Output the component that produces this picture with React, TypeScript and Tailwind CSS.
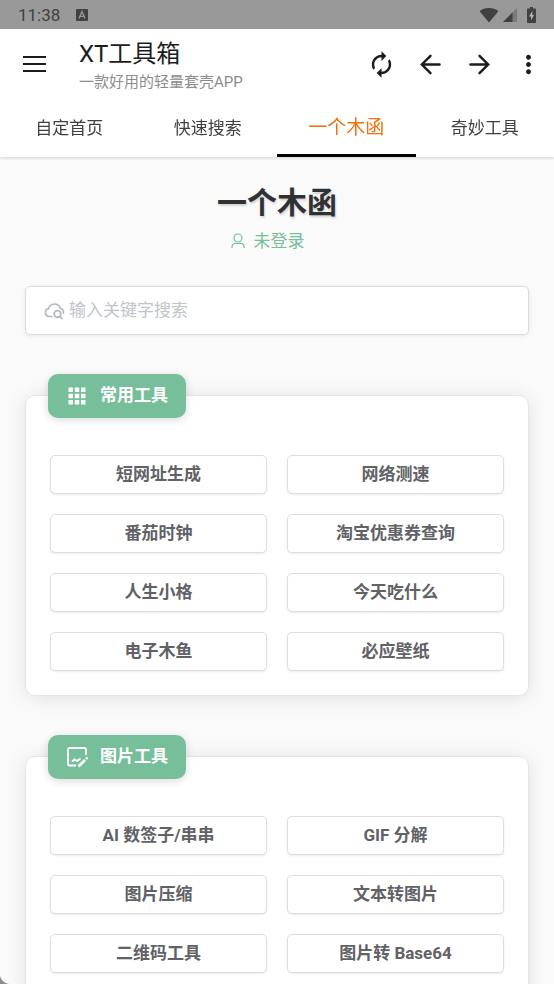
import React, { useState } from 'react';
import { MdAutorenew, MdMoreVert } from 'react-icons/md';

interface ToolGroup {
  id: string;
  title: string;
  icon: React.ReactNode;
  tools: string[];
}

const TABS = ['自定首页', '快速搜索', '一个木函', '奇妙工具'];

function StatusBar() {
  return (
    <div className="flex h-[29px] shrink-0 items-center bg-[#999999] pl-[18px] pr-[18px] pt-px text-[#414141]">
      <span className="text-[17px] leading-5">11:38</span>
      <svg className="ml-4" width="12" height="12" viewBox="0 0 12 12">
        <rect width="12" height="12" rx="1" fill="currentColor" />
        <path d="M3 9.5 6 2.5l3 7M4 7.3h4" fill="none" stroke="#999999" strokeWidth="1.3" />
      </svg>
      <svg className="ml-auto" width="20" height="16" viewBox="0 0 20 16" fill="currentColor">
        <path d="M10 15.5.6 4.2C3 2 6.3 1 10 1s7 1 9.4 3.2z" />
      </svg>
      <svg className="ml-1" width="14" height="14" viewBox="0 0 14 14" fill="currentColor">
        <path d="M14 0v14H0z" opacity=".35" />
        <path d="M9.500 4.500V14H0z" />
      </svg>
      <svg className="ml-2.5" width="9" height="16" viewBox="0 0 9 16">
        <path d="M3 0h3v1.6h2.2c.5 0 .8.3.8.8v12.8c0 .5-.3.8-.8.8H.8c-.5 0-.8-.3-.8-.8V2.4c0-.5.3-.8.8-.8H3z" fill="currentColor" />
        <path d="M5.3 4 2 9.5h2v4L7 8H5.3z" fill="#b5b5b5" />
      </svg>
    </div>
  );
}

function AppHeader() {
  return (
    <header className="flex h-[70px] shrink-0 items-center pl-[22px] pr-[11px] text-[#1c1c1c]">
      <button type="button" aria-label="菜单">
        <svg width="24" height="16" viewBox="0 0 24 16" stroke="currentColor" strokeWidth="2">
          <path d="M1 1h23M1 8h23M1 15h23" />
        </svg>
      </button>
      <div className="ml-[33px] flex-1 pt-1">
        <div className="text-2xl leading-8">XT工具箱</div>
        <div className="text-[15px] leading-6 text-[#8c8c8c]">一款好用的轻量套壳APP</div>
      </div>
      <div className="flex items-center gap-5">
        <button type="button" aria-label="刷新">
          <MdAutorenew size={29} />
        </button>
        <button type="button" aria-label="后退">
          <svg width="29" height="29" viewBox="0 0 24 24" fill="none" stroke="currentColor" strokeWidth="2" strokeLinecap="round">
            <path d="M19.5 12H5M12 4.8 4.8 12l7.2 7.2" />
          </svg>
        </button>
        <button type="button" aria-label="前进">
          <svg width="29" height="29" viewBox="0 0 24 24" fill="none" stroke="currentColor" strokeWidth="2" strokeLinecap="round">
            <path d="M4.5 12H19M12 4.8l7.2 7.2-7.2 7.2" />
          </svg>
        </button>
        <button type="button" aria-label="更多">
          <MdMoreVert size={29} />
        </button>
      </div>
    </header>
  );
}

interface TabBarProps {
  active: string;
  onChange: (tab: string) => void;
}

function TabBar({ active, onChange }: TabBarProps) {
  return (
    <nav className="relative z-10 grid h-[58px] shrink-0 grid-cols-4 bg-white shadow-[0_2px_2px_rgba(0,0,0,0.1)]">
      {TABS.map(tab => (
        <button
          key={tab}
          type="button"
          onClick={() => onChange(tab)}
          className={
            tab === active
              ? 'border-b-[3px] border-black pt-1 text-[19px] text-[#f1700f]'
              : 'border-b-[3px] border-transparent pt-1 text-[17px] text-[#404040]'
          }
        >
          {tab}
        </button>
      ))}
    </nav>
  );
}

function GridIcon() {
  return (
    <svg width="22" height="22" viewBox="0 0 22 22" fill="currentColor">
      <path d="M2.500 2.500h4.400v4.400H2.500zM8.800 2.500h4.400v4.400H8.800zM15.100 2.500h4.400v4.400h-4.400zM2.500 8.800h4.400v4.400H2.500zM8.800 8.800h4.400v4.400H8.800zM15.100 8.800h4.400v4.400h-4.400zM2.500 15.100h4.400v4.400H2.500zM8.800 15.100h4.400v4.400H8.800zM15.100 15.100h4.400v4.400h-4.400z" />
    </svg>
  );
}

function ImageEditIcon() {
  return (
    <svg width="22" height="22" viewBox="0 0 22 22" fill="none" stroke="currentColor" strokeWidth="1.8">
      <path d="M10 19.500H3.500A1.500 1.500 0 0 1 2 18V3.500A1.500 1.500 0 0 1 3.500 2h15A1.500 1.500 0 0 1 20 3.500V9" />
      <path d="M6 15.500l2.500-2 2.500 1.500 3.500-2.500" strokeWidth="2" />
      <path d="M12.500 20.500l6.500-6.500" strokeWidth="2.600" />
      <path d="M20 13l1.500-1.500" strokeWidth="2.600" />
    </svg>
  );
}

const GROUPS: ToolGroup[] = [
  {
    id: 'common',
    title: '常用工具',
    icon: <GridIcon />,
    tools: ['短网址生成', '网络测速', '番茄时钟', '淘宝优惠券查询', '人生小格', '今天吃什么', '电子木鱼', '必应壁纸'],
  },
  {
    id: 'image',
    title: '图片工具',
    icon: <ImageEditIcon />,
    tools: ['AI 数签子/串串', 'GIF 分解', '图片压缩', '文本转图片', '二维码工具', '图片转 Base64'],
  },
];

function ToolCard({ group }: { group: ToolGroup }) {
  return (
    <section className="rounded-[10px] border border-[#e6e6e6] bg-white pb-6 shadow-[0_2px_20px_rgba(0,0,0,0.1)]">
      <h2 className="-mt-[22px] ml-[22px] flex h-11 w-fit items-center gap-3 rounded-[10px] bg-[#77be9b] px-[18px] text-[17px] font-bold text-white shadow-[0_2px_8px_rgba(0,0,0,0.15)]">
        {group.icon}
        {group.title}
      </h2>
      <div className="mt-[37px] grid grid-cols-2 gap-5 px-6">
        {group.tools.map(tool => (
          <button
            key={tool}
            type="button"
            className="h-[39px] rounded-[5px] border border-[#dedede] bg-white text-[17px] font-bold text-[#606266] shadow-[0_1px_2px_rgba(0,0,0,0.08)]"
          >
            {tool}
          </button>
        ))}
      </div>
    </section>
  );
}

export default function App() {
  const [activeTab, setActiveTab] = useState('一个木函');
  const [keyword, setKeyword] = useState('');

  return (
    <div className="h-screen bg-[#8a8a8a]">
      <div className="flex h-full flex-col overflow-hidden rounded-bl-[10px] bg-white font-['Roboto','Noto_Sans_CJK_SC',sans-serif]">
        <StatusBar />
        <AppHeader />
        <TabBar active={activeTab} onChange={setActiveTab} />

        <main className="flex-1 overflow-y-auto bg-[#fafafa] px-[25px] pb-10 [scrollbar-width:none]">
          <h1 className="pt-[26px] text-center text-[30px] leading-10 font-bold text-[#303133] [text-shadow:1px_2px_2px_rgba(0,0,0,0.15)]">
            一个木函
          </h1>
          <a href="#login" className="mx-auto mt-1 flex w-fit items-center gap-2 pr-5 text-[17px] leading-7 text-[#77be9b]">
            <svg width="16" height="16" viewBox="0 0 16 16" fill="none" stroke="currentColor" strokeWidth="1.2">
              <circle cx="8" cy="5" r="4" />
              <path d="M2 15v-1.500a3 3 0 0 1 3-3h6a3 3 0 0 1 3 3V15" />
            </svg>
            未登录
          </a>

          <label className="mt-[31px] flex h-[49px] items-center gap-1 rounded-[5px] border border-[#dcdcdc] bg-white px-[18px] text-[#b4b7bd] shadow-[0_1px_4px_rgba(0,0,0,0.08)]">
            <svg width="21" height="20" viewBox="0 0 21 20" fill="none" stroke="currentColor" strokeWidth="1.7">
              <path d="M8.500 15.500H5.200a4 4 0 0 1-.6-7.900 6 6 0 0 1 11.600-.3 4 4 0 0 1 3 5.500" />
              <circle cx="13.500" cy="13" r="3.300" />
              <path d="M16 15.500l2.500 2.800" />
            </svg>
            <input
              type="text"
              aria-label="搜索"
              value={keyword}
              onChange={e => setKeyword(e.target.value)}
              placeholder="输入关键字搜索"
              className="min-w-0 flex-1 text-[17px] text-[#606266] outline-none placeholder:text-[#c0c4cc]"
            />
          </label>

          <div className="mt-[60px] flex flex-col gap-[60px]">
            {GROUPS.map(group => (
              <ToolCard key={group.id} group={group} />
            ))}
          </div>
        </main>
      </div>
    </div>
  );
}
